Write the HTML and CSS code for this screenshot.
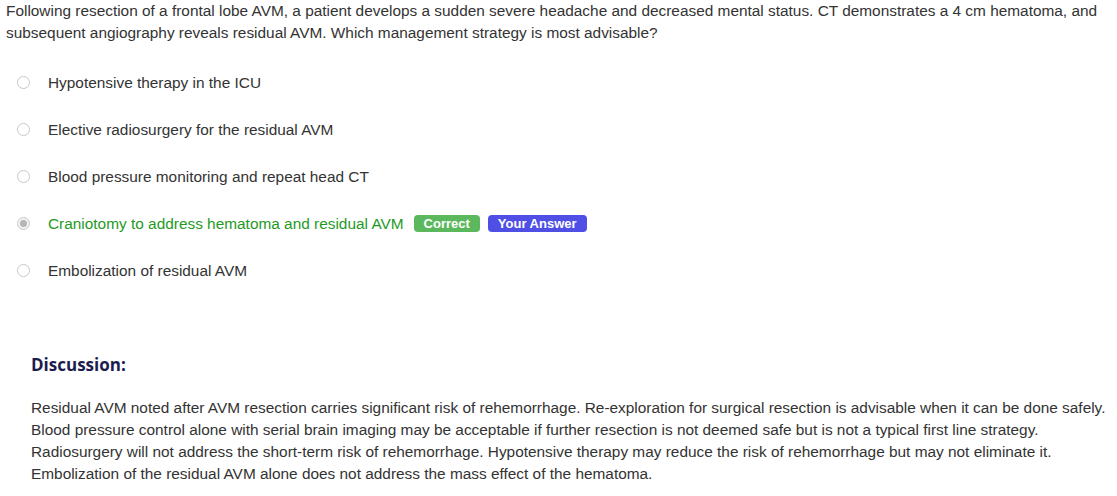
FILE: index.html
```html
<!DOCTYPE html>
<html>
<head>
<meta charset="utf-8">
<link rel="stylesheet" href="styles.css">
</head>
<body>
<div class="page">
  <p class="question">Following resection of a frontal lobe AVM, a patient develops a sudden severe headache and decreased mental status. CT demonstrates a 4 cm hematoma, and subsequent angiography reveals residual AVM. Which management strategy is most advisable?</p>
  <ul class="options">
    <li class="option"><span class="radio"></span><span class="label">Hypotensive therapy in the ICU</span></li>
    <li class="option"><span class="radio"></span><span class="label">Elective radiosurgery for the residual AVM</span></li>
    <li class="option"><span class="radio"></span><span class="label">Blood pressure monitoring and repeat head CT</span></li>
    <li class="option correct"><span class="radio checked"></span><span class="label">Craniotomy to address hematoma and residual AVM</span><span class="badge badge-green">Correct</span><span class="badge badge-blue">Your Answer</span></li>
    <li class="option"><span class="radio"></span><span class="label">Embolization of residual AVM</span></li>
  </ul>
  <div class="discussion">
    <h3 class="disc-title">Discussion:</h3>
    <p class="disc-text">Residual AVM noted after AVM resection carries significant risk of rehemorrhage. Re-exploration for surgical resection is advisable when it can be done safely.<br>Blood pressure control alone with serial brain imaging may be acceptable if further resection is not deemed safe but is not a typical first line strategy.<br>Radiosurgery will not address the short-term risk of rehemorrhage. Hypotensive therapy may reduce the risk of rehemorrhage but may not eliminate it.<br>Embolization of the residual AVM alone does not address the mass effect of the hematoma.</p>
  </div>
</div>
</body>
</html>
```
FILE: styles.css
```css
html, body {
  margin: 0;
  padding: 0;
  background: #fff;
}
body {
  font-family: "Liberation Sans", Arial, sans-serif;
  font-size: 15.4px;
  color: #333;
}
.page {
  padding: 0 6px;
}
.question {
  margin: 0;
  line-height: 22px;
}
.options {
  list-style: none;
  margin: 15px 0 0 0;
  padding: 0;
}
.option {
  display: flex;
  align-items: center;
  height: 47px;
  padding-left: 11px;
}
.radio {
  width: 13px;
  height: 13px;
  box-sizing: border-box;
  border: 1px solid #c8c8c8;
  border-radius: 50%;
  background: #fff;
  margin-right: 18px;
  flex: none;
  position: relative;
}
.radio.checked {
  background: #f2f2f2;
}
.radio.checked::after {
  content: "";
  position: absolute;
  left: 2px;
  top: 2px;
  width: 7px;
  height: 7px;
  border-radius: 50%;
  background: #b5b5b5;
}
.correct .label {
  color: #1f9a1f;
}
.badge {
  display: inline-block;
  font-weight: bold;
  font-size: 13px;
  line-height: 17px;
  color: #fff;
  padding: 0 10px;
  border-radius: 4px;
}
.badge-green {
  background: #5cb85c;
  margin-left: 10px;
}
.badge-blue {
  background: #4f4fe6;
  margin-left: 8px;
}
.discussion {
  padding-left: 25px;
  margin-top: 60px;
}
.disc-title {
  margin: 0;
  font-family: "Open Sans", sans-serif;
  font-weight: 700;
  font-size: 17px;
  color: #1c1c50;
  line-height: 22px;
}
.disc-text {
  margin: 21px 0 0 0;
  line-height: 22px;
}
```
